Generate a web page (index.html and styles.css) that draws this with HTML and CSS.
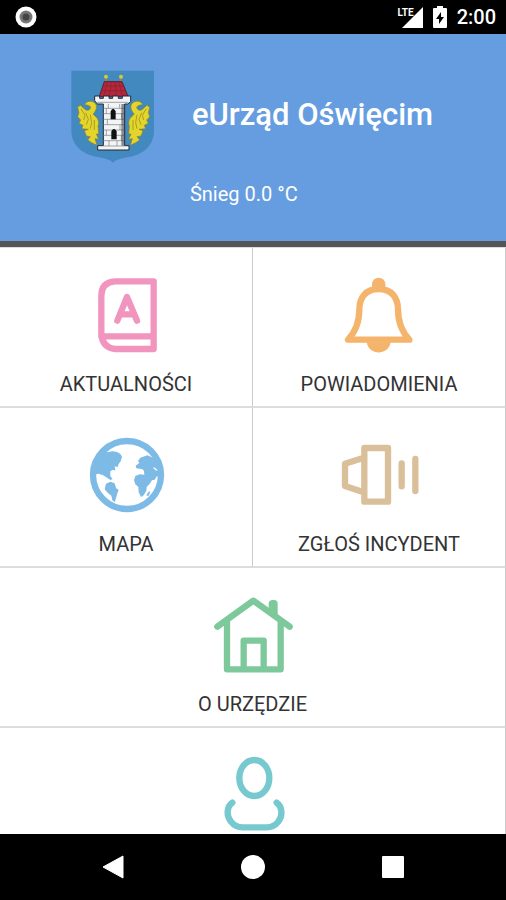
FILE: index.html
```html
<!DOCTYPE html>
<html lang="pl">
<head>
    <meta charset="UTF-8">
    <meta name="viewport" content="width=device-width, initial-scale=1.0">
    <title>eUrząd Oświęcim</title>
    <link rel="stylesheet" href="styles.css">
</head>
<body>
    <div class="status-bar">
        <svg class="status-dot" viewBox="0 0 22 22">
            <circle cx="11" cy="11" r="10.500" fill="#fff"/>
            <circle cx="11" cy="11" r="6.500" fill="#777"/>
            <circle cx="11" cy="11" r="3.500" fill="#444"/>
        </svg>
        <div class="status-right">
            <span class="lte">LTE</span>
            <svg class="signal" viewBox="0 0 21 21"><path d="M21 0V21H0z" fill="#fff"/></svg>
            <svg class="battery" viewBox="0 0 14 22">
                <path d="M4 0H10V2H13Q14 2 14 3V21Q14 22 13 22H1Q0 22 0 21V3Q0 2 1 2H4z" fill="#fff"/>
                <path d="M8 6L3 13H6V18L11 11H8z" fill="#000"/>
            </svg>
            <span class="time">2:00</span>
        </div>
    </div>

    <header class="header">
        <svg class="crest" viewBox="36 30 252 282">
            <path d="M37 32H285V210C285 260 250 285 205 292C185 296 170 300 162 308C155 300 140 296 120 292C75 285 37 260 37 210z" fill="#4289bf"/>
            <!-- eagle halves -->
            <g id="eagle" fill="#e3d52c" stroke="#8c8420" stroke-width="2">
                <path d="M76 134C84 120 106 120 112 136C114 148 108 156 102 162L110 170C118 176 121 188 117 198L119 222L112 222L119 238L108 236L114 256L98 248L86 240L94 230L82 228L76 212L88 208L68 206L72 196L60 190L65 180L56 170L60 158L56 142L64 136L76 146C82 154 92 151 95 143C93 135 85 135 76 134z"/>
                <path d="M66 146L78 166L74 180M80 158L88 178L82 194M94 164L98 188L94 206M106 180L106 210" fill="none"/>
            </g>
            <use href="#eagle" transform="translate(328 0) scale(-1 1)"/>
            <!-- tower -->
            <path d="M141 68V48M185 68V48" stroke="#8f8c34" stroke-width="4"/>
            <circle cx="141" cy="50" r="6" fill="#d5c934"/>
            <circle cx="186" cy="50" r="6" fill="#d5c934"/>
            <path d="M136 65H189L207 109H121z" fill="#b5283b" stroke="#59202d" stroke-width="3"/>
            <path d="M132 78H193M128 92H200M145 67L134 108M157 67L151 108M169 67L171 108M180 67L190 108" stroke="#832234" stroke-width="2"/>
            <path d="M107 108H122V115H133V108H150V115H161V108H178V115H190V108H215V125L206 132H197V257H210V270H116V257H133V132H115L107 122z" fill="#f4f4f5" stroke="#252b36" stroke-width="3"/>
            <path d="M115 127H207M133 145H197M133 161H197M133 178H197M133 194H197M133 210H197M133 226H197M133 242H197M133 258H197M148 132V145M182 132V145M142 145V161M188 161V178M145 178V194M183 194V210M142 210V226M187 226V242M150 242V258M174 242V258" stroke="#777b82" stroke-width="2"/>
            <path d="M187 132H198V257H187z" fill="#30353e" opacity=".55"/>
            <path d="M155 178V154Q162 139 170 154V178zM157 238V214Q165 200 173 214V238z" fill="#111"/>
        </svg>
        <h1 class="title">eUrząd Oświęcim</h1>
        <p class="weather">Śnieg 0.0 °C</p>
    </header>

    <main class="menu">
        <a class="tile" href="#aktualnosci">
            <svg class="icon book" viewBox="18 45 240 240">
                <path d="M221 64H105C77 66 64 82 64 108V224C67 251 82 265 105 267H221zM64 229H221"/>
                <path d="M112 182L141 111L171 182M123 163H160"/>
            </svg>
            <span>AKTUALNOŚCI</span>
        </a>
        <a class="tile" href="#powiadomienia">
            <svg class="icon bell" viewBox="57 45 240 240">
                <path d="M176 87C137 87 118 113 118 148C118 185 109 213 84 239H268C243 213 234 185 234 148C234 113 215 87 176 87z"/>
                <path class="solid" d="M140 247H212C205 288 147 288 140 247zM156 88V73A20 20 0 0 1 196 73V88z"/>
            </svg>
            <span>POWIADOMIENIA</span>
        </a>
        <a class="tile" href="#mapa">
            <svg class="icon globe" viewBox="18 15 240 240">
                <circle cx="141" cy="135" r="102"/>
                <path class="solid" d="M43 100L62 69L98 64Q122 66 126 81Q124 94 116 102L113 111L104 109L106 121L97 120L91 124V139L98 147L91 150L79 142L68 135L55 131L42 135z"/>
                <path class="solid" d="M78 161L91 155L104 160L108 174L116 180L111 193L108 205L104 217L97 211L94 197L83 188L74 178z"/>
                <path class="solid" d="M202 76L181 83L174 93L178 99L167 107L169 115L188 118L192 124L193 134L179 133L166 138L162 151L166 163L175 171L176 187L183 201L191 196L199 182L200 171L208 163L216 151L224 149L231 138L240 145V113L229 88zM199 196L207 184L211 186L205 199z"/>
                <path d="M222 114L230 120" stroke="#fff"/>
            </svg>
            <span>MAPA</span>
        </a>
        <a class="tile" href="#incydent">
            <svg class="icon horn" viewBox="147 15 240 240">
                <path d="M223 54H294V215H223zM219 84L165 101V168L219 186M335 100V169M376 87V183"/>
            </svg>
            <span>ZGŁOŚ INCYDENT</span>
        </a>
        <a class="tile wide" href="#urzad">
            <svg class="icon house" viewBox="69 30 240 240">
                <path d="M82 125L190 47L299 125M111 108V253H272V108M161 253V167H221V253"/>
                <path class="solid" d="M236 75V56Q236 45 248 45H252Q263 45 263 56V98z"/>
            </svg>
            <span>O URZĘDZIE</span>
        </a>
        <a class="tile wide" href="#konto" aria-label="Konto">
            <svg class="icon person" viewBox="39 105 240 240">
                <ellipse cx="163" cy="174" rx="45" ry="54"/>
                <path d="M97 248C80 260 78 287 93 305Q106 322 128 322H200Q222 322 235 305C249 287 247 260 230 248"/>
            </svg>
        </a>
    </main>

    <nav class="nav-bar">
        <button type="button" aria-label="Wstecz"><svg viewBox="0 0 24 24"><path d="M22 1V23L2 12z" stroke="#fff" stroke-linejoin="round"/></svg></button>
        <button type="button" aria-label="Ekran główny"><svg viewBox="0 0 24 24"><circle cx="12" cy="12" r="12"/></svg></button>
        <button type="button" aria-label="Ostatnie"><svg viewBox="0 0 24 24"><rect x="1" y="1" width="22" height="22" rx="1"/></svg></button>
    </nav>
</body>
</html>
```
FILE: styles.css
```css
* {
    box-sizing: border-box;
}
body {
    display: flex;
    flex-direction: column;
    height: 100vh;
    margin: 0;
    overflow: hidden;
    background: #fff;
    color: #333;
    font-family: Roboto, sans-serif;
}
.status-bar {
    display: flex;
    flex: none;
    justify-content: space-between;
    align-items: center;
    height: 34px;
    padding: 0 10px 0 15px;
    background: #000;
    color: #fff;
}
.status-dot {
    width: 22px;
    height: 22px;
}
.status-right {
    display: flex;
    align-items: center;
}
.lte {
    align-self: flex-start;
    font-size: 10px;
    line-height: 16px;
    font-weight: 700;
    margin-right: -12px;
}
.signal {
    width: 21px;
    height: 21px;
    margin-right: 10px;
}
.battery {
    width: 14px;
    height: 22px;
    margin-right: 10px;
}
.time {
    font-size: 20px;
    line-height: 24px;
    font-weight: 500;
}
.header {
    display: grid;
    flex: none;
    grid-template-columns: 84px auto;
    justify-content: center;
    column-gap: 35px;
    padding: 36px 0 34px;
    background: #659de0;
    border-bottom: 6px solid #555;
    color: #fff;
}
.crest {
    width: 84px;
    height: 94px;
}
.title {
    margin: 0;
    padding: 0 2px;
    font-size: 31px;
    line-height: 90px;
    font-weight: 500;
}
.weather {
    grid-column: 2;
    margin: 17px 0 0;
    font-size: 20px;
    line-height: 26px;
}
.menu {
    display: grid;
    flex: 1;
    grid-template-columns: 1fr 1fr;
    grid-auto-rows: 160px;
    min-height: 0;
    overflow: hidden;
    border-top: 1px solid #ddd;
}
.tile {
    display: flex;
    flex-direction: column;
    align-items: center;
    gap: 17px;
    padding-top: 27px;
    border-right: 1px solid #ccc;
    border-bottom: 2px solid #ddd;
    color: #333;
    font-size: 20px;
    line-height: 24px;
    text-decoration: none;
}
.wide {
    grid-column: span 2;
}
.icon {
    width: 80px;
    height: 80px;
    overflow: visible;
    fill: none;
    stroke: currentColor;
    stroke-width: 19px;
    stroke-linecap: round;
    stroke-linejoin: round;
}
.icon .solid {
    fill: currentColor;
    stroke: none;
}
.globe path {
    stroke-width: 4px;
}
.book {
    color: #f195bf;
}
.bell {
    color: #f5b46b;
}
.globe {
    color: #7dbbe6;
}
.horn {
    color: #dac09a;
}
.house {
    color: #7ec99b;
}
.person {
    color: #76c9ce;
}
.nav-bar {
    display: flex;
    flex: none;
    justify-content: center;
    align-items: center;
    gap: 116px;
    height: 66px;
    background: #000;
}
.nav-bar button {
    width: 24px;
    height: 24px;
    padding: 0;
    border: none;
    background: none;
}
.nav-bar svg {
    display: block;
    fill: #fff;
}
```
